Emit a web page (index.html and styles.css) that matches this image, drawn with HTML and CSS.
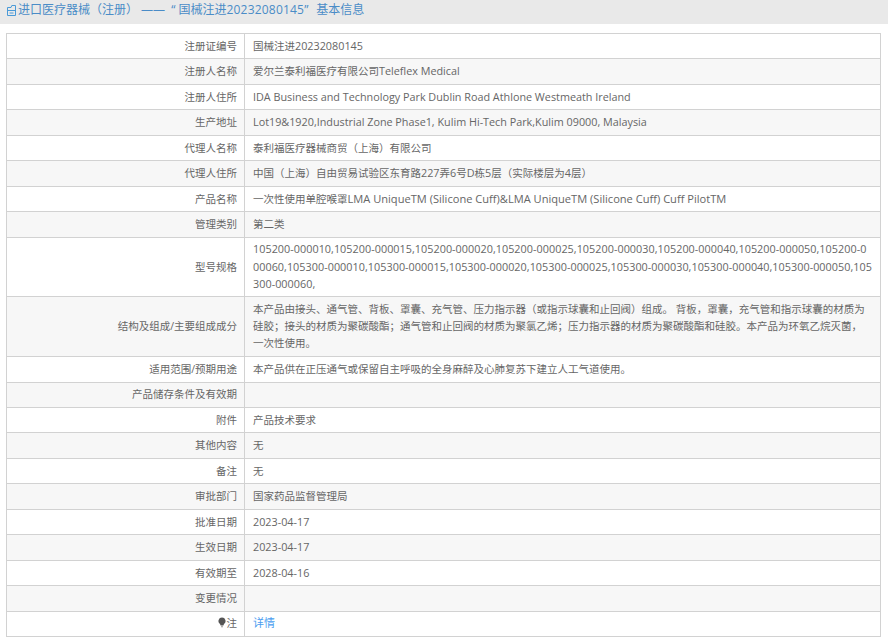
FILE: index.html
```html
<!DOCTYPE html>
<html lang="zh-CN">
<head>
    <meta charset="UTF-8">
    <meta name="viewport" content="width=device-width, initial-scale=1.0">
    <title>进口医疗器械（注册）基本信息</title>
    <link rel="stylesheet" href="styles.css">
</head>
<body>
    <div class="page-title">
        <svg class="title-icon" viewBox="0 0 10 11" width="10" height="11">
            <path d="M0.500 2.500h3.500l0.800-2h3.700v10h-8z M0.500 5.500h8 M2.500 8h4" fill="none" stroke="#4a9ad8" stroke-width="1"/>
        </svg>
        <span>进口医疗器械（注册） —— <span class="open-quote">“</span>国械注进<span class="title-num">20232080145</span><span class="close-quote">”</span>基本信息</span>
    </div>
    <table class="info-table">
        <colgroup>
            <col class="col-label">
            <col>
        </colgroup>
        <tr><td class="label">注册证编号</td><td>国械注进<span class="en">20232080145</span></td></tr>
        <tr><td class="label">注册人名称</td><td>爱尔兰泰利福医疗有限公司<span class="en">Teleflex Medical</span></td></tr>
        <tr><td class="label">注册人住所</td><td><span class="en">IDA Business and Technology Park Dublin Road Athlone Westmeath Ireland</span></td></tr>
        <tr><td class="label">生产地址</td><td><span class="en">Lot19&amp;1920,Industrial Zone Phase1, Kulim Hi-Tech Park,Kulim 09000, Malaysia</span></td></tr>
        <tr><td class="label">代理人名称</td><td>泰利福医疗器械商贸（上海）有限公司</td></tr>
        <tr><td class="label">代理人住所</td><td>中国（上海）自由贸易试验区东育路<span class="en">227</span>弄<span class="en">6</span>号<span class="en">D</span>栋<span class="en">5</span>层（实际楼层为<span class="en">4</span>层）</td></tr>
        <tr><td class="label">产品名称</td><td>一次性使用单腔喉罩<span class="en product-name">LMA UniqueTM (Silicone Cuff)&amp;LMA UniqueTM (Silicone Cuff) Cuff PilotTM</span></td></tr>
        <tr><td class="label">管理类别</td><td>第二类</td></tr>
        <tr><td class="label">型号规格</td><td><span class="en model-list">105200-000010,105200-000015,105200-000020,105200-000025,105200-000030,105200-000040,105200-000050,105200-0<br>00060,105300-000010,105300-000015,105300-000020,105300-000025,105300-000030,105300-000040,105300-000050,105<br>300-000060,</span></td></tr>
        <tr><td class="label">结构及组成/主要组成成分</td><td>本产品由接头、通气管、背板、罩囊、充气管、压力指示器（或指示球囊和止回阀）组成。 背板，罩囊，充气管和指示球囊的材质为硅胶；接头的材质为聚碳酸酯；通气管和止回阀的材质为聚氯乙烯；压力指示器的材质为聚碳酸酯和硅胶。本产品为环氧乙烷灭菌，一次性使用。</td></tr>
        <tr><td class="label">适用范围/预期用途</td><td>本产品供在正压通气或保留自主呼吸的全身麻醉及心肺复苏下建立人工气道使用。</td></tr>
        <tr><td class="label">产品储存条件及有效期</td><td></td></tr>
        <tr><td class="label">附件</td><td>产品技术要求</td></tr>
        <tr><td class="label">其他内容</td><td>无</td></tr>
        <tr><td class="label">备注</td><td>无</td></tr>
        <tr><td class="label">审批部门</td><td>国家药品监督管理局</td></tr>
        <tr><td class="label">批准日期</td><td><span class="en">2023-04-17</span></td></tr>
        <tr><td class="label">生效日期</td><td><span class="en">2023-04-17</span></td></tr>
        <tr><td class="label">有效期至</td><td><span class="en">2028-04-16</span></td></tr>
        <tr><td class="label">变更情况</td><td></td></tr>
        <tr>
            <td class="label">
                <svg class="note-icon" viewBox="0 0 8 11" width="8" height="11">
                    <path d="M4 0.500a3.500 3.500 0 0 1 2 6.400l-0.600 1.600h-2.800l-0.600-1.600a3.500 3.500 0 0 1 2-6.400z" fill="#555"/>
                    <path d="M3 9.300h2v1h-2z" fill="#999"/>
                </svg>注
            </td>
            <td><a class="detail-link" href="#">详情</a></td>
        </tr>
    </table>
</body>
</html>
```

FILE: styles.css
```css
body {
    margin: 0;
    background: white;
    font-family: "Open Sans", "Noto Sans CJK SC", sans-serif;
    font-size: 10.5px;
    color: #666;
}
.page-title {
    display: flex;
    align-items: center;
    height: 24px;
    padding-left: 7px;
    padding-bottom: 4px;
    box-sizing: border-box;
    background: #e9e9e9;
    color: #4a8cc7;
    font-size: 12px;
    line-height: 20px;
    white-space: nowrap;
}
.title-icon {
    margin-right: 1px;
}
.open-quote {
    margin-left: 3px;
    margin-right: 3px;
}
.close-quote {
    margin-right: 8px;
}
.title-num {
    letter-spacing: 0.2px;
}
.info-table {
    width: 875px;
    margin: 9px 0 0 6px;
    border-collapse: collapse;
    table-layout: fixed;
    line-height: 17.1px;
}
.col-label {
    width: 238px;
}
.info-table td {
    border: 1px solid #d2d2d2;
    padding: 3.7px 8px;
    word-break: break-all;
}
.info-table td.label {
    text-align: right;
    padding-right: 7px;
}
.info-table tr:nth-child(even) {
    background: #f7f7f7;
}
.info-table .en {
    font-size: 10.8px;
    line-height: 0;
}
.info-table .product-name {
    font-size: 11.1px;
}
.model-list {
    letter-spacing: 0.04px;
}
.note-icon {
    vertical-align: -1px;
    margin-right: 1px;
}
.detail-link {
    color: #4a9df0;
    font-size: 11px;
    line-height: 0;
    text-decoration: none;
}
```
